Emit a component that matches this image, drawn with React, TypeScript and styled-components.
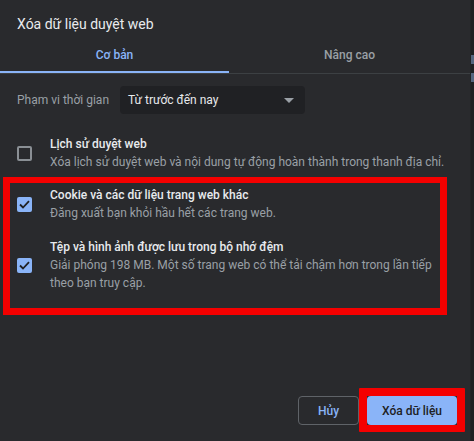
import React from "react";
import styled, { createGlobalStyle } from "styled-components";

const Global = createGlobalStyle`
  html, body { margin: 0; padding: 0; background: #292a2d; }
  body { font-family: Roboto, "Liberation Sans", Arial, sans-serif; }
  * { box-sizing: border-box; }
`;

const Page = styled.div`
  display: flex;
  width: 474px;
  height: 441px;
  background: #292a2d;
  overflow: hidden;
`;

const Dialog = styled.div`
  flex: 1;
  min-width: 0;
  display: flex;
  flex-direction: column;
  height: 100%;
`;

const Scrollbar = styled.div`
  width: 4px;
  flex: none;
  background: #1f2023;
  border-left: 1px solid #232427;
  padding-top: 55px;
  display: flex;
  flex-direction: column;
  gap: 9px;
`;

const ScrollMark = styled.div`
  height: 9px;
  background: #55657f;
`;

const Title = styled.h1`
  margin: 0;
  padding: 14px 0 0 17px;
  font-size: 14px;
  line-height: 20px;
  font-weight: 400;
  color: #e8eaed;
`;

const Tabs = styled.div`
  margin-top: 4px;
  display: grid;
  grid-template-columns: 229px 1fr;
  border-bottom: 1px solid #3c4043;
`;

const Tab = styled.div<{ $active?: boolean }>`
  height: 35px;
  display: flex;
  align-items: center;
  justify-content: center;
  padding-top: 1px;
  font-size: 12px;
  font-weight: 500;
  color: ${(p) => (p.$active ? "#8ab4f8" : "#9aa0a6")};
  border-bottom: 2px solid ${(p) => (p.$active ? "#8ab4f8" : "transparent")};
`;

const Body = styled.div`
  padding: 0 20px 0 17px;
  display: flex;
  flex-direction: column;
`;

const RangeRow = styled.div`
  margin-top: 12px;
  display: flex;
  align-items: center;
  gap: 12px;
`;

const RangeLabel = styled.span`
  font-size: 12px;
  color: #9aa0a6;
  width: 91px;
  white-space: nowrap;
`;

const Select = styled.div`
  width: 185px;
  height: 28px;
  background: #202124;
  border-radius: 4px;
  display: flex;
  align-items: center;
  justify-content: space-between;
  padding: 0 8px;
  font-size: 12px;
  color: #e8eaed;
`;

const Caret = styled.span`
  width: 0;
  height: 0;
  border-left: 5px solid transparent;
  border-right: 5px solid transparent;
  border-top: 5px solid #9aa0a6;
  margin-right: 3px;
`;

const Row = styled.div<{ $gapTop?: number }>`
  display: flex;
  align-items: center;
  margin-top: ${(p) => p.$gapTop ?? 0}px;
`;

const Box = styled.div<{ $checked?: boolean }>`
  width: 15px;
  height: 15px;
  flex: none;
  border-radius: 2px;
  background: ${(p) => (p.$checked ? "#8ab4f8" : "transparent")};
  border: ${(p) => (p.$checked ? "none" : "2px solid #8a8f94")};
  display: flex;
  align-items: center;
  justify-content: center;
  margin-right: 18px;
`;

const Texts = styled.div`
  display: flex;
  flex-direction: column;
  min-width: 0;
`;

const RowTitle = styled.div`
  font-size: 12px;
  line-height: 18px;
  font-weight: 500;
  color: #e8eaed;
  white-space: nowrap;
`;

const RowDesc = styled.div`
  font-size: 12px;
  line-height: 18px;
  color: #9aa0a6;
  white-space: nowrap;
`;

const Highlight = styled.div`
  margin: 6px 3px 0 -14px;
  border: 7px solid #f40000;
  border-top-width: 6px;
  padding: 3px 0 16px 7px;
  display: flex;
  flex-direction: column;
  gap: 16px;
`;

const Footer = styled.div`
  margin-top: auto;
  display: flex;
  justify-content: flex-end;
  gap: 8px;
  padding: 0 13px 16px 0;
`;

const Button = styled.button<{ $primary?: boolean }>`
  position: relative;
  height: 29px;
  border-radius: 4px;
  font-family: inherit;
  font-size: 12px;
  font-weight: 500;
  padding: 0;
  width: ${(p) => (p.$primary ? "90px" : "61px")};
  background: ${(p) => (p.$primary ? "#8ab4f8" : "transparent")};
  color: ${(p) => (p.$primary ? "#202124" : "#8ab4f8")};
  border: ${(p) => (p.$primary ? "none" : "1px solid #5f6368")};

  &::after {
    content: "";
    display: ${(p) => (p.$primary ? "block" : "none")};
    position: absolute;
    inset: -8px -8px -7px -8px;
    border: 8px solid #f40000;
    border-bottom-width: 7px;
    border-radius: 1px;
    pointer-events: none;
  }
`;

const Check = () => (
  <svg width="11" height="9" viewBox="0 0 11 9">
    <path d="M1 4.5 L4 7.5 L10 1.2" fill="none" stroke="#202124" strokeWidth="1.8" />
  </svg>
);

export default function App() {
  return (
    <Page>
      <Global />
      <Dialog>
        <Title>Xóa dữ liệu duyệt web</Title>
        <Tabs>
          <Tab $active>Cơ bản</Tab>
          <Tab>Nâng cao</Tab>
        </Tabs>
        <Body>
          <RangeRow>
            <RangeLabel>Phạm vi thời gian</RangeLabel>
            <Select>
              <span>Từ trước đến nay</span>
              <Caret />
            </Select>
          </RangeRow>
          <Row $gapTop={21}>
            <Box />
            <Texts>
              <RowTitle>Lịch sử duyệt web</RowTitle>
              <RowDesc>Xóa lịch sử duyệt web và nội dung tự động hoàn thành trong thanh địa chỉ.</RowDesc>
            </Texts>
          </Row>
          <Highlight>
            <Row>
              <Box $checked>
                <Check />
              </Box>
              <Texts>
                <RowTitle>Cookie và các dữ liệu trang web khác</RowTitle>
                <RowDesc>Đăng xuất bạn khỏi hầu hết các trang web.</RowDesc>
              </Texts>
            </Row>
            <Row>
              <Box $checked>
                <Check />
              </Box>
              <Texts>
                <RowTitle>Tệp và hình ảnh được lưu trong bộ nhớ đệm</RowTitle>
                <RowDesc>Giải phóng 198 MB. Một số trang web có thể tải chậm hơn trong lần tiếp</RowDesc>
                <RowDesc>theo bạn truy cập.</RowDesc>
              </Texts>
            </Row>
          </Highlight>
        </Body>
        <Footer>
          <Button>Hủy</Button>
          <Button $primary>Xóa dữ liệu</Button>
        </Footer>
      </Dialog>
      <Scrollbar>
        <ScrollMark />
        <ScrollMark />
      </Scrollbar>
    </Page>
  );
}
